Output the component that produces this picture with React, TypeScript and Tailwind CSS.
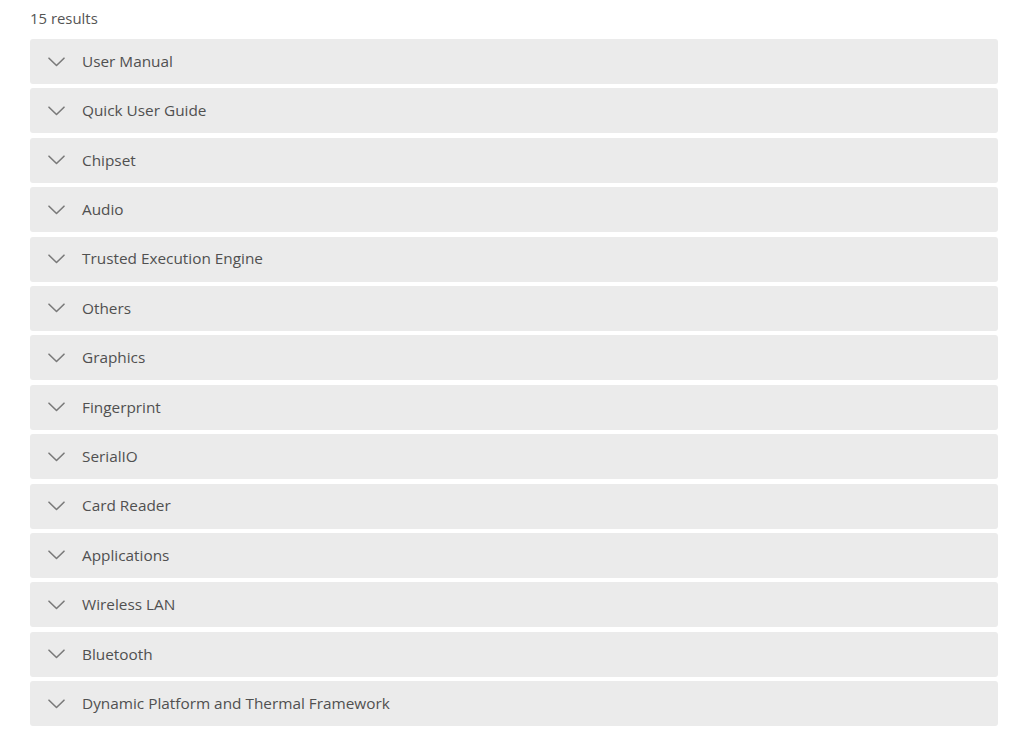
import React from "react";

const items = [
  "User Manual",
  "Quick User Guide",
  "Chipset",
  "Audio",
  "Trusted Execution Engine",
  "Others",
  "Graphics",
  "Fingerprint",
  "SerialIO",
  "Card Reader",
  "Applications",
  "Wireless LAN",
  "Bluetooth",
  "Dynamic Platform and Thermal Framework",
];

function Chevron() {
  return (
    <svg width="17" height="10" viewBox="0 0 17 10" fill="none" className="shrink-0">
      <path d="M1 1.2 L8.5 8.5 L16 1.2" stroke="#7a7a7a" strokeWidth="1.6" strokeLinecap="round" strokeLinejoin="round" />
    </svg>
  );
}

export default function App() {
  return (
    <div className="h-[735px] overflow-hidden bg-white px-[30px] pt-[9px] text-[#555555]" style={{ fontFamily: '"Open Sans", "Noto Sans", sans-serif' }}>
      <div className="text-[14.9px] leading-[19px] text-[#555555]">15 results</div>
      <div className="mt-[11px] flex w-[968px] flex-col gap-[4.4px]">
        {items.map((t) => (
          <div key={t} className="flex h-[45px] items-center rounded-[3px] bg-[#ebebeb] pl-[18px]">
            <Chevron />
            <span className="ml-[17px] text-[15.35px] leading-none text-[#505050]">{t}</span>
          </div>
        ))}
      </div>
    </div>
  );
}
